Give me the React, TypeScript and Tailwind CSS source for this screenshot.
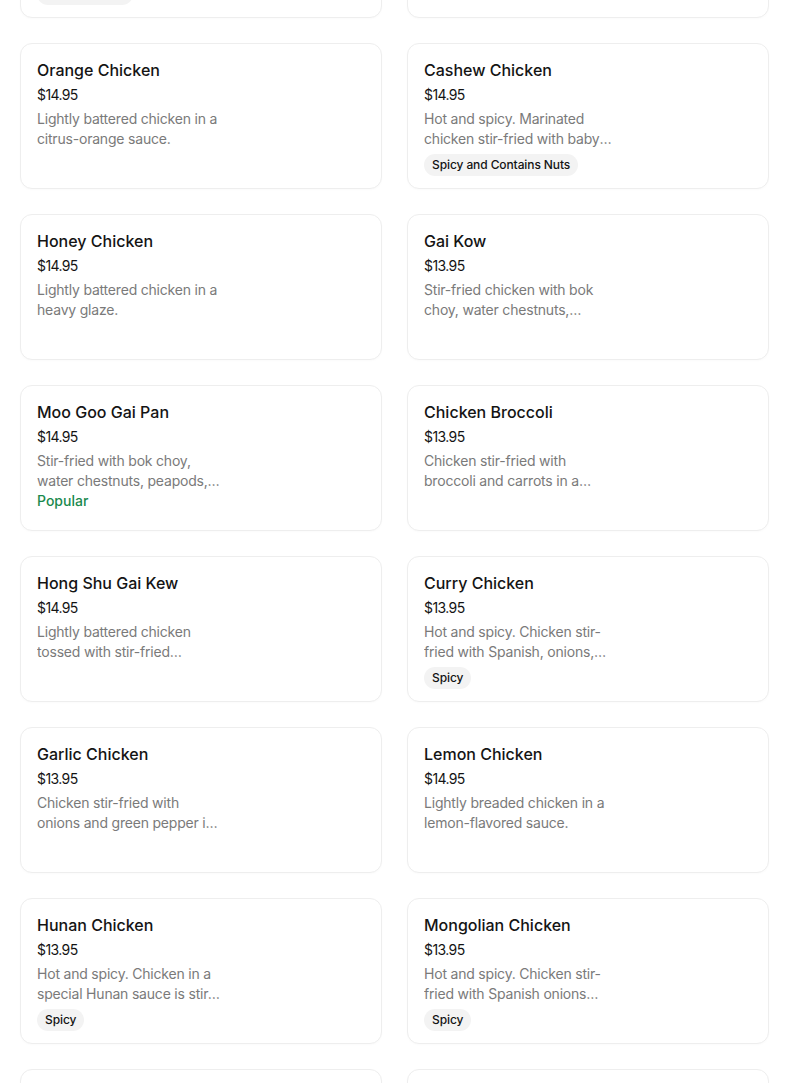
type Item = {
  name: string;
  price: string;
  description: string;
  tag?: string;
  popular?: boolean;
};

const items: Item[] = [
  { name: 'Sesame Chicken', price: '$14.95', description: 'Lightly battered chicken in a sweet sesame sauce.', tag: 'Contains Nuts' },
  { name: 'General Tso Chicken', price: '$14.95', description: 'Lightly battered chicken in a tangy sauce.' },
  { name: 'Orange Chicken', price: '$14.95', description: 'Lightly battered chicken in a citrus-orange sauce.' },
  { name: 'Cashew Chicken', price: '$14.95', description: 'Hot and spicy. Marinated chicken stir-fried with baby corn, water chestnuts and cashews.', tag: 'Spicy and Contains Nuts' },
  { name: 'Honey Chicken', price: '$14.95', description: 'Lightly battered chicken in a heavy glaze.' },
  { name: 'Gai Kow', price: '$13.95', description: 'Stir-fried chicken with bok choy, water chestnuts, mushrooms and snow peas.' },
  { name: 'Moo Goo Gai Pan', price: '$14.95', description: 'Stir-fried with bok choy, water chestnuts, peapods, mushrooms and carrots.', popular: true },
  { name: 'Chicken Broccoli', price: '$13.95', description: 'Chicken stir-fried with broccoli and carrots in a brown sauce.' },
  { name: 'Hong Shu Gai Kew', price: '$14.95', description: 'Lightly battered chicken tossed with stir-fried vegetables.' },
  { name: 'Curry Chicken', price: '$13.95', description: 'Hot and spicy. Chicken stir-fried with Spanish, onions, green peppers in curry sauce.', tag: 'Spicy' },
  { name: 'Garlic Chicken', price: '$13.95', description: 'Chicken stir-fried with onions and green pepper in a garlic sauce.' },
  { name: 'Lemon Chicken', price: '$14.95', description: 'Lightly breaded chicken in a lemon-flavored sauce.' },
  { name: 'Hunan Chicken', price: '$13.95', description: 'Hot and spicy. Chicken in a special Hunan sauce is stir-fried with vegetables.', tag: 'Spicy' },
  { name: 'Mongolian Chicken', price: '$13.95', description: 'Hot and spicy. Chicken stir-fried with Spanish onions and green onions.', tag: 'Spicy' },
  { name: 'Kung Pao Chicken', price: '$13.95', description: 'Hot and spicy. Chicken with peanuts.' },
  { name: 'Szechuan Chicken', price: '$13.95', description: 'Hot and spicy. Chicken with vegetables.' },
];

function MenuCard({ item }: { item: Item }) {
  return (
    <div className="h-[146px] rounded-xl border border-[#eeeeee] bg-white px-4 pt-4 shadow-[0_1px_2px_rgba(0,0,0,0.02)]">
      <div className="text-[16px] leading-5 font-medium text-[#141414]">{item.name}</div>
      <div className="mt-[5px] text-[14px] leading-5 text-[#141414] tracking-[-0.6px]">{item.price}</div>
      <p className="mt-1 w-[188px] text-[14px] leading-5 text-[#7a7a7a] tracking-[-0.2px] line-clamp-2">
        {item.description}
      </p>
      {item.popular && (
        <div className="text-[14px] leading-5 font-medium text-[#1a8a4e]">Popular</div>
      )}
      {item.tag && (
        <div className="mt-[5px] inline-flex h-[22px] items-center rounded-full bg-[#f3f3f3] px-2 text-[12px] font-medium text-[#141414] tracking-[-0.1px]">
          {item.tag}
        </div>
      )}
    </div>
  );
}

export default function App() {
  return (
    <div
      className="h-[1083px] overflow-hidden bg-white"
      style={{ fontFamily: 'Inter, "Noto Sans", sans-serif' }}
    >
      <div className="mt-[-128px] pl-5">
        <div className="grid grid-cols-[362px_362px] gap-[25px]">
          {items.map((item) => (
            <MenuCard key={item.name} item={item} />
          ))}
        </div>
      </div>
    </div>
  );
}
